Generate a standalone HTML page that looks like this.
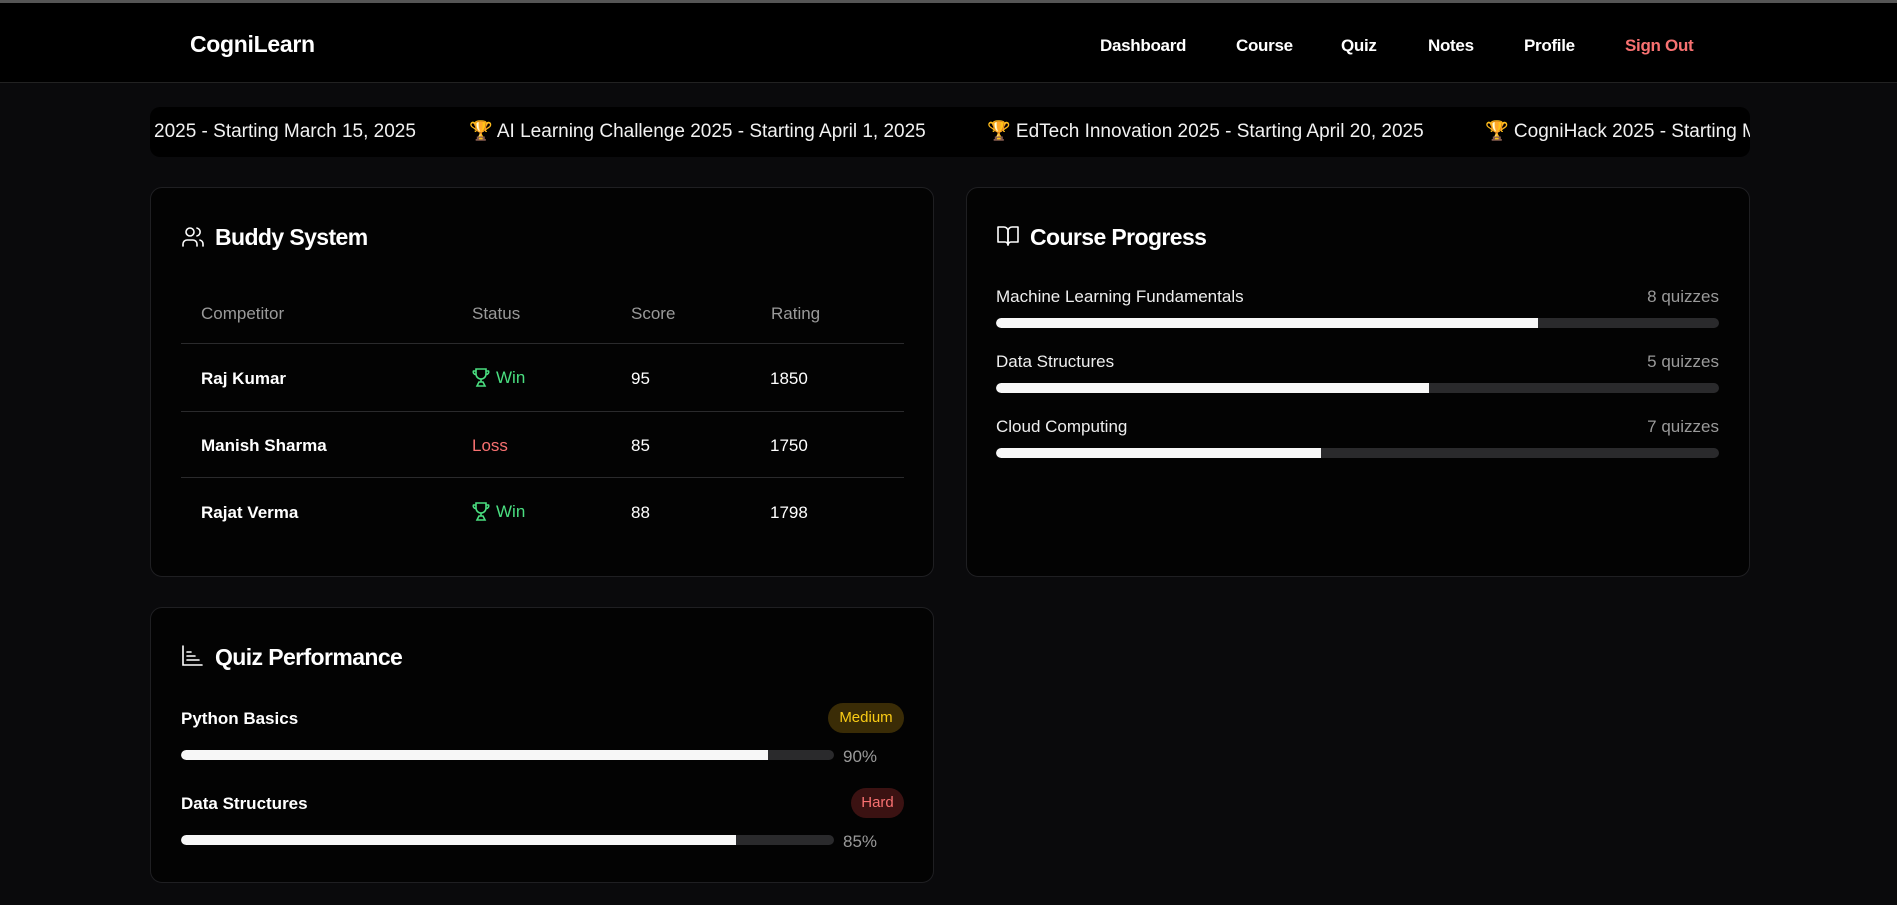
<!DOCTYPE html>
<html><head><meta charset="utf-8"><style>
*{margin:0;padding:0;box-sizing:border-box}
body{width:1897px;height:905px;background:#0a0a0c;font-family:"Liberation Sans",sans-serif;color:#fff;position:relative;overflow:hidden}
.abs{position:absolute}
.topline{left:0;top:0;width:1897px;height:3px;background:#555}
.nav{left:0;top:3px;width:1897px;height:80px;background:#000;border-bottom:1px solid #222}
.logo{left:190px;top:31px;font-size:23px;font-weight:bold;letter-spacing:-0.3px}
.nl{top:36px;font-size:17px;font-weight:bold;letter-spacing:-0.3px}
.ticker{left:150px;top:107px;width:1600px;height:50px;background:#000;border-radius:10px;overflow:hidden}
.ti{top:13px;font-size:19px;line-height:24px;height:24px;white-space:nowrap;color:#f2f2f2}
.card{background:#030303;border:1px solid #1f1f22;border-radius:12px}
.title{font-size:23px;font-weight:bold;letter-spacing:-0.6px}
.th{font-size:17px;color:#9a9a9a}
.td{font-size:17px}
.b{font-weight:bold}
.hl{height:1px;background:#2a2a2c}
.bar{height:10px;border-radius:5px;background:#2a2a2c;overflow:hidden}
.fill{height:10px;background:#f7f7f7;border-radius:5px 0 0 5px}
.lbl{font-size:17px;color:#eee}
.q{font-size:17px;color:#9a9a9a}
.badge{border-radius:15px;font-size:15px;text-align:center;line-height:30px;height:30px}
</style></head><body>
<div class="abs topline"></div>
<div class="abs nav"></div>
<div class="abs logo">CogniLearn</div>
<div class="abs nl" style="left:1100px">Dashboard</div>
<div class="abs nl" style="left:1236px">Course</div>
<div class="abs nl" style="left:1341px">Quiz</div>
<div class="abs nl" style="left:1428px">Notes</div>
<div class="abs nl" style="left:1524px">Profile</div>
<div class="abs nl" style="left:1625px;color:#f87171">Sign Out</div>

<div class="abs ticker">
<div class="abs ti" style="left:4px">2025 - Starting March 15, 2025</div>
<div class="abs ti" style="left:319px">🏆 AI Learning Challenge 2025 - Starting April 1, 2025</div>
<div class="abs ti" style="left:837px">🏆 EdTech Innovation 2025 - Starting April 20, 2025</div>
<div class="abs ti" style="left:1335px">🏆 CogniHack 2025 - Starting March 15, 2025</div>
</div>

<!-- Buddy -->
<div class="abs card" style="left:150px;top:187px;width:784px;height:390px"></div>
<svg class="abs" style="left:181px;top:225px" width="24" height="24" viewBox="0 0 24 24" fill="none" stroke="#fff" stroke-width="1.6" stroke-linecap="round"><circle cx="9" cy="7" r="4"/><path d="M2 21v-2a4 4 0 0 1 4-4h6a4 4 0 0 1 4 4v2"/><path d="M16 3.1a4 4 0 0 1 0 7.8"/><path d="M22 21v-2a4 4 0 0 0-3-3.9"/></svg>
<div class="abs title" style="left:215px;top:224px">Buddy System</div>
<div class="abs th" style="left:201px;top:304px">Competitor</div>
<div class="abs th" style="left:472px;top:304px">Status</div>
<div class="abs th" style="left:631px;top:304px">Score</div>
<div class="abs th" style="left:771px;top:304px">Rating</div>
<div class="abs hl" style="left:181px;top:343px;width:723px"></div>
<div class="abs hl" style="left:181px;top:411px;width:723px"></div>
<div class="abs hl" style="left:181px;top:477px;width:723px"></div>
<div class="abs td b" style="left:201px;top:369px">Raj Kumar</div>
<div class="abs td b" style="left:201px;top:436px">Manish Sharma</div>
<div class="abs td b" style="left:201px;top:503px">Rajat Verma</div>
<svg class="abs" style="left:472px;top:367px" width="18" height="20" viewBox="0 0 18 20" fill="none" stroke="#4ade80" stroke-width="1.6"><path d="M4 2h10v5a5 5 0 0 1-10 0z"/><path d="M4 4H1.5a2.5 2.5 0 0 0 2.5 3.5M14 4h2.5a2.5 2.5 0 0 1-2.5 3.5"/><path d="M9 12v3M7 15l-2 4h8l-2-4z"/></svg>
<div class="abs td" style="left:496px;top:368px;color:#4ade80">Win</div>
<div class="abs td" style="left:472px;top:436px;color:#f87171">Loss</div>
<svg class="abs" style="left:472px;top:501px" width="18" height="20" viewBox="0 0 18 20" fill="none" stroke="#4ade80" stroke-width="1.6"><path d="M4 2h10v5a5 5 0 0 1-10 0z"/><path d="M4 4H1.5a2.5 2.5 0 0 0 2.5 3.5M14 4h2.5a2.5 2.5 0 0 1-2.5 3.5"/><path d="M9 12v3M7 15l-2 4h8l-2-4z"/></svg>
<div class="abs td" style="left:496px;top:502px;color:#4ade80">Win</div>
<div class="abs td" style="left:631px;top:369px">95</div>
<div class="abs td" style="left:631px;top:436px">85</div>
<div class="abs td" style="left:631px;top:503px">88</div>
<div class="abs td" style="left:770px;top:369px">1850</div>
<div class="abs td" style="left:770px;top:436px">1750</div>
<div class="abs td" style="left:770px;top:503px">1798</div>

<!-- Course Progress -->
<div class="abs card" style="left:966px;top:187px;width:784px;height:390px"></div>
<svg class="abs" style="left:996px;top:225px" width="24" height="22" viewBox="0 0 24 22" fill="none" stroke="#fff" stroke-width="1.6" stroke-linejoin="round"><path d="M2 2h6a4 4 0 0 1 4 4v14a3 3 0 0 0-3-3H2z"/><path d="M22 2h-6a4 4 0 0 0-4 4v14a3 3 0 0 1 3-3h7z"/></svg>
<div class="abs title" style="left:1030px;top:224px">Course Progress</div>
<div class="abs lbl" style="left:996px;top:287px">Machine Learning Fundamentals</div>
<div class="abs q" style="left:1600px;width:119px;text-align:right;top:287px">8 quizzes</div>
<div class="abs bar" style="left:996px;top:318px;width:723px"><div class="fill" style="width:542px"></div></div>
<div class="abs lbl" style="left:996px;top:352px">Data Structures</div>
<div class="abs q" style="left:1600px;width:119px;text-align:right;top:352px">5 quizzes</div>
<div class="abs bar" style="left:996px;top:383px;width:723px"><div class="fill" style="width:433px"></div></div>
<div class="abs lbl" style="left:996px;top:417px">Cloud Computing</div>
<div class="abs q" style="left:1600px;width:119px;text-align:right;top:417px">7 quizzes</div>
<div class="abs bar" style="left:996px;top:448px;width:723px"><div class="fill" style="width:325px"></div></div>

<!-- Quiz Performance -->
<div class="abs card" style="left:150px;top:607px;width:784px;height:276px"></div>
<svg class="abs" style="left:181px;top:645px" width="22" height="22" viewBox="0 0 22 22" fill="none" stroke="#fff" stroke-width="1.6" stroke-linecap="round"><path d="M2 1v19h19"/><path d="M6 7h4M6 11h8M6 15h12"/></svg>
<div class="abs title" style="left:215px;top:644px">Quiz Performance</div>
<div class="abs lbl b" style="left:181px;top:709px;color:#fff">Python Basics</div>
<div class="abs badge" style="left:828px;top:703px;width:76px;background:#3a2c06;color:#facc15">Medium</div>
<div class="abs bar" style="left:181px;top:750px;width:653px"><div class="fill" style="width:587px"></div></div>
<div class="abs q" style="left:843px;top:747px">90%</div>
<div class="abs lbl b" style="left:181px;top:794px;color:#fff">Data Structures</div>
<div class="abs badge" style="left:851px;top:788px;width:53px;background:#3b1212;color:#f87171">Hard</div>
<div class="abs bar" style="left:181px;top:835px;width:653px"><div class="fill" style="width:555px"></div></div>
<div class="abs q" style="left:843px;top:832px">85%</div>
</body></html>
